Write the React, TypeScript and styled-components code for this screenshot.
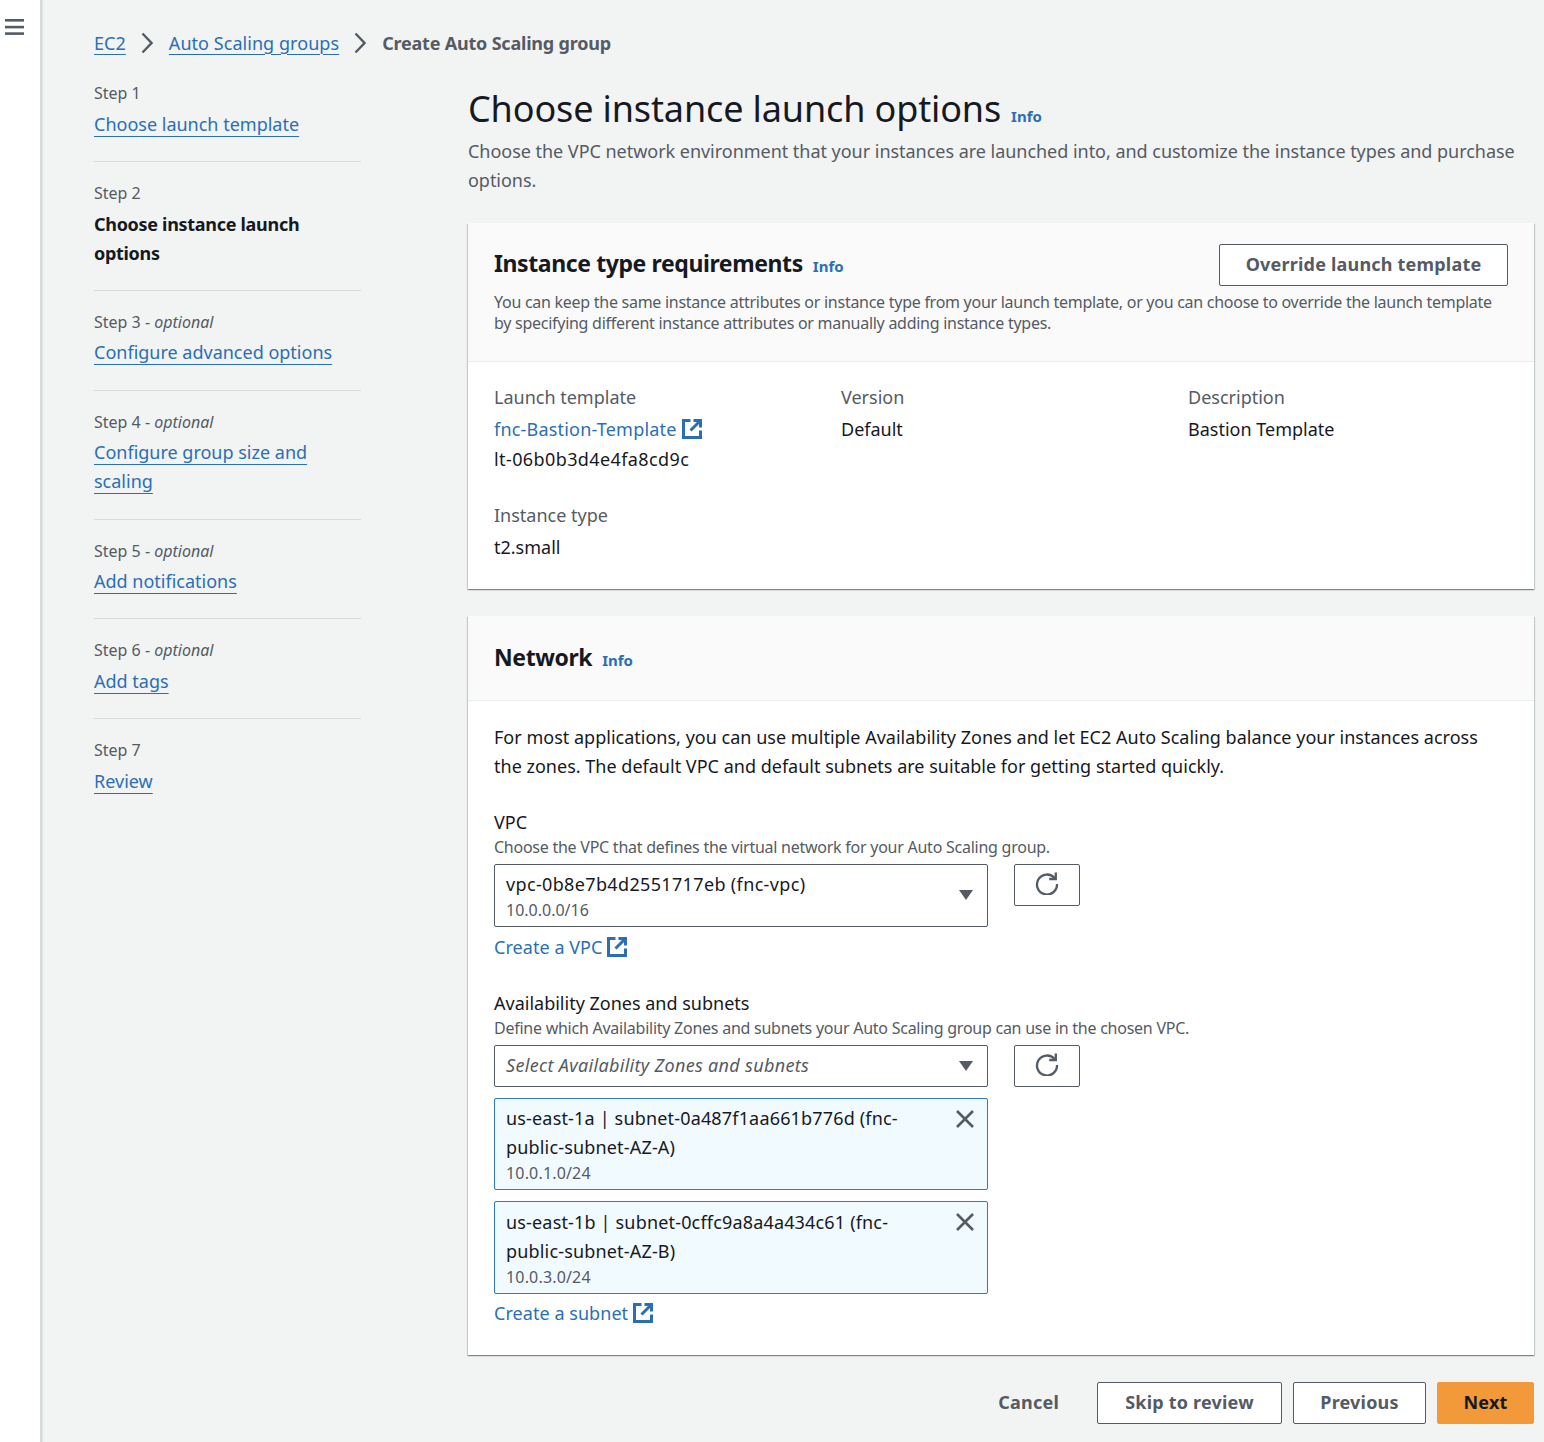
import React from "react";
import styled, { createGlobalStyle } from "styled-components";

const ink = "#16191f";
const grey = "#545b64";
const blue = "#2a6fb5";

const Global = createGlobalStyle`
  html, body { margin: 0; padding: 0; background: #f2f3f3; }
  body { font-family: "Noto Sans", "Open Sans", Arial, sans-serif; color: ${ink}; font-size: 18px; line-height: 29px; }
  * { box-sizing: border-box; }
`;

const Page = styled.div`
  display: flex;
  width: 1544px;
  height: 1442px;
  overflow: hidden;
  background: #f2f3f3;
`;
const Rail = styled.aside`
  flex: 0 0 42px;
  background: #fff;
  border-right: 2px solid #d5dbdb;
  box-shadow: 1px 0 1px rgba(0, 0, 0, 0.06);
  padding: 19px 0 0 5px;
  line-height: 0;
`;
const Main = styled.main`
  flex: 1;
  min-width: 0;
  padding: 28px 10px 0 52px;
`;
const Crumbs = styled.nav`
  display: flex;
  align-items: center;
  height: 30px;
  font-size: 18px;
`;
const Crumb = styled.a`
  color: ${blue};
  letter-spacing: 0.05px;
  text-decoration: underline;
  text-underline-offset: 4px;
  text-decoration-thickness: 1px;
`;
const Current = styled.span`
  color: ${grey};
  font-weight: 700;
  letter-spacing: -0.2px;
`;
const Columns = styled.div`
  display: flex;
  margin-top: 4.4px;
`;
const Steps = styled.ol`
  flex: 0 0 267px;
  list-style: none;
  margin: 0 107px 0 0;
  padding: 0;
`;
const Step = styled.li`
  padding: 18px 0 22.3px;
  border-bottom: 1px solid #d5dbdb;
  &:last-child { border-bottom: 0; }
`;
const StepLabel = styled.div`
  font-size: 16px;
  line-height: 26px;
  color: ${grey};
  margin-bottom: 3.5px;
  em { font-style: italic; }
`;
const StepLink = styled.a`
  color: ${blue};
  text-decoration: underline;
  text-underline-offset: 5px;
  text-decoration-thickness: 1px;
`;
const StepNow = styled.strong`
  font-weight: 700;
  letter-spacing: -0.3px;
`;
const Content = styled.div`
  flex: 1;
  min-width: 0;
`;
const HeadRow = styled.div`
  display: flex;
  align-items: baseline;
  gap: 10px;
  margin-top: 22.6px;
`;
const H1 = styled.h1`
  margin: 0;
  font-size: 36px;
  line-height: 48px;
  font-weight: 400;
  letter-spacing: -0.13px;
`;
const Info = styled.a`
  color: ${blue};
  font-size: 15px;
  font-weight: 700;
`;
const Lead = styled.p`
  margin: 4px 0 28px;
  color: ${grey};
  letter-spacing: -0.03px;
`;
const Card = styled.section`
  background: #fff;
  margin-bottom: 27px;
  box-shadow: 0 1px 1px 0 rgba(0, 28, 36, 0.3), 1px 1px 1px 0 rgba(0, 28, 36, 0.15), -1px 1px 1px 0 rgba(0, 28, 36, 0.15);
`;
const CardHead = styled.header<{ $h: number; $pt: number }>`
  height: ${(p) => p.$h}px;
  padding: ${(p) => p.$pt}px 26px 0;
  background: #fafafa;
  border-bottom: 1px solid #eaeded;
`;
const HeadTop = styled.div`
  display: flex;
  justify-content: space-between;
  align-items: center;
  min-height: 42px;
`;
const TitleRow = styled.div`
  display: flex;
  align-items: baseline;
  gap: 10px;
  padding-bottom: 2px;
`;
const H2 = styled.h2`
  margin: 0;
  font-size: 23px;
  line-height: 32px;
  font-weight: 700;
  letter-spacing: -0.4px;
`;
const HeadDesc = styled.p`
  margin: 6px 0 0;
  font-size: 16px;
  line-height: 21px;
  color: ${grey};
  letter-spacing: -0.27px;
`;
const Button = styled.button<{ $primary?: boolean; $w?: number }>`
  height: 42px;
  width: ${(p) => (p.$w ? `${p.$w}px` : "auto")};
  border-radius: 2px;
  font: 700 18px "Noto Sans", sans-serif;
  letter-spacing: 0.2px;
  padding: 0 0 1px;
  color: ${(p) => (p.$primary ? ink : grey)};
  background: ${(p) => (p.$primary ? "#f2993a" : "#fff")};
  border: 1px solid ${(p) => (p.$primary ? "#f2993a" : grey)};
`;
const SummaryBody = styled.div`
  display: grid;
  grid-template-columns: 347px 347px 1fr;
  padding: 21px 26px 27px;
`;
const Field = styled.div`
  color: ${ink};
`;
const FieldLabel = styled.div`
  color: ${grey};
  margin-bottom: 3px;
`;
const Mono = styled.div`
  letter-spacing: 0.4px;
  margin-top: 1px;
`;
const FieldWide = styled(Field)`
  grid-column: 1 / -1;
  margin-top: 27px;
`;
const LinkRow = styled.a<{ $ls?: number }>`
  display: inline-flex;
  align-items: center;
  gap: 5px;
  color: ${blue};
  letter-spacing: ${(p) => p.$ls ?? 0.05}px;
`;
const NetBody = styled.div`
  padding: 22px 26px 27px;
`;
const Para = styled.p`
  margin: 0 0 28px;
  max-width: 1000px;
  letter-spacing: 0.01px;
`;
const FormLabel = styled.div`
  line-height: 27px;
`;
const FormHint = styled.div`
  font-size: 16px;
  line-height: 23px;
  color: ${grey};
  margin-bottom: 5px;
  letter-spacing: -0.25px;
`;
const SelectRow = styled.div`
  display: flex;
  align-items: flex-start;
  gap: 26px;
`;
const Select = styled.div<{ $tall?: boolean }>`
  flex: 0 0 494px;
  height: ${(p) => (p.$tall ? 63 : 42)}px;
  border: 1px solid ${grey};
  border-radius: 2px;
  background: #fff;
  padding: ${(p) => (p.$tall ? "2px" : "5px")} 14px 0 11px;
  display: flex;
  justify-content: space-between;
  align-items: ${(p) => (p.$tall ? "center" : "flex-start")};
`;
const VpcName = styled.span`
  letter-spacing: 0.35px;
`;
const Placeholder = styled.span`
  font-style: italic;
  color: ${grey};
  letter-spacing: 0.32px;
`;
const Sub = styled.div`
  font-size: 16px;
  line-height: 23px;
  color: ${grey};
`;
const Caret = styled.span<{ $mt: number }>`
  flex: none;
  width: 0;
  height: 0;
  margin-top: ${(p) => p.$mt}px;
  border-left: 7.5px solid transparent;
  border-right: 7.5px solid transparent;
  border-top: 10px solid ${grey};
`;
const Refresh = styled.div`
  flex: 0 0 66px;
  height: 42px;
  padding-bottom: 4px;
  border: 1px solid ${grey};
  border-radius: 2px;
  background: #fff;
  display: flex;
  align-items: center;
  justify-content: center;
`;
const CreateLine = styled.div<{ $mt: number }>`
  margin-top: ${(p) => p.$mt}px;
`;
const Group = styled.div`
  margin-top: 28px;
`;
const Token = styled.div`
  width: 494px;
  height: 92.5px;
  margin-top: 11px;
  padding: 5.5px 12px 0 11px;
  background: #f1faff;
  border: 1px solid #2e7bbd;
  border-radius: 2px;
  display: flex;
  justify-content: space-between;
  align-items: flex-start;
`;
const TokenText = styled.div`
  width: 410px;
  letter-spacing: 0.17px;
`;
const Close = styled.span`
  flex: none;
  margin-top: 4.5px;
  display: flex;
`;
const Footer = styled.footer`
  display: flex;
  align-items: center;
  justify-content: flex-end;
  gap: 11px;
`;
const Cancel = styled.span`
  color: ${grey};
  font-weight: 700;
  margin-right: 27px;
  letter-spacing: 0.2px;
`;

const External = () => (
  <svg width="20" height="20" viewBox="0 0 20 20" fill="none" stroke={blue} strokeWidth="3">
    <path d="M8.5 1.5h-7v17h17v-7" />
    <path d="M11.5 1.5h7v7M18 2 8.5 11.5" />
  </svg>
);
const RefreshIcon = () => (
  <svg width="24" height="24" viewBox="0 0 24 24" fill="none" stroke={grey} strokeWidth="2.3">
    <path d="M19.6 7A10 10 0 1 0 22 13" />
    <path d="M20.8 1.5V8h-6.6" />
  </svg>
);
const X = () => (
  <svg width="20" height="20" viewBox="0 0 20 20" stroke={grey} strokeWidth="2.6" fill="none">
    <path d="m2 2 16 16M18 2 2 18" />
  </svg>
);
const Chevron = () => (
  <svg width="12" height="22" viewBox="0 0 12 22" fill="none" stroke={grey} strokeWidth="2.4" style={{ margin: "0 16px 0 15px" }}>
    <path d="m1.5 1.5 9 9.5-9 9.5" />
  </svg>
);

const steps: { n: number; opt?: boolean; text: string; now?: boolean }[] = [
  { n: 1, text: "Choose launch template" },
  { n: 2, text: "Choose instance launch options", now: true },
  { n: 3, opt: true, text: "Configure advanced options" },
  { n: 4, opt: true, text: "Configure group size and scaling" },
  { n: 5, opt: true, text: "Add notifications" },
  { n: 6, opt: true, text: "Add tags" },
  { n: 7, text: "Review" },
];

export default function App() {
  return (
    <>
      <Global />
      <Page>
        <Rail>
          <svg width="19" height="16" viewBox="0 0 19 16" fill={grey}>
            <rect y="0" width="19" height="2.6" />
            <rect y="6.8" width="19" height="2.6" />
            <rect y="13.3" width="19" height="2.6" />
          </svg>
        </Rail>
        <Main>
          <Crumbs>
            <Crumb>EC2</Crumb>
            <Chevron />
            <Crumb>Auto Scaling groups</Crumb>
            <Chevron />
            <Current>Create Auto Scaling group</Current>
          </Crumbs>
          <Columns>
            <Steps>
              {steps.map((s) => (
                <Step key={s.n}>
                  <StepLabel>
                    Step {s.n}
                    {s.opt && (
                      <>
                        {" - "}
                        <em>optional</em>
                      </>
                    )}
                  </StepLabel>
                  {s.now ? <StepNow>{s.text}</StepNow> : <StepLink>{s.text}</StepLink>}
                </Step>
              ))}
            </Steps>
            <Content>
              <HeadRow>
                <H1>Choose instance launch options</H1>
                <Info>Info</Info>
              </HeadRow>
              <Lead>
                Choose the VPC network environment that your instances are launched into, and customize the instance types and purchase options.
              </Lead>
              <Card>
                <CardHead $h={139} $pt={21}>
                  <HeadTop>
                    <TitleRow>
                      <H2>Instance type requirements</H2>
                      <Info>Info</Info>
                    </TitleRow>
                    <Button $w={289}>Override launch template</Button>
                  </HeadTop>
                  <HeadDesc>
                    You can keep the same instance attributes or instance type from your launch template, or you can choose to override the launch template by specifying different instance attributes or manually adding instance types.
                  </HeadDesc>
                </CardHead>
                <SummaryBody>
                  <Field>
                    <FieldLabel>Launch template</FieldLabel>
                    <LinkRow $ls={0.2}>
                      fnc-Bastion-Template <External />
                    </LinkRow>
                    <Mono>lt-06b0b3d4e4fa8cd9c</Mono>
                  </Field>
                  <Field>
                    <FieldLabel>Version</FieldLabel>
                    Default
                  </Field>
                  <Field>
                    <FieldLabel>Description</FieldLabel>
                    Bastion Template
                  </Field>
                  <FieldWide>
                    <FieldLabel>Instance type</FieldLabel>
                    t2.small
                  </FieldWide>
                </SummaryBody>
              </Card>
              <Card>
                <CardHead $h={85} $pt={25}>
                  <TitleRow>
                    <H2>Network</H2>
                    <Info>Info</Info>
                  </TitleRow>
                </CardHead>
                <NetBody>
                  <Para>
                    For most applications, you can use multiple Availability Zones and let EC2 Auto Scaling balance your instances across the zones. The default VPC and default subnets are suitable for getting started quickly.
                  </Para>
                  <FormLabel>VPC</FormLabel>
                  <FormHint>Choose the VPC that defines the virtual network for your Auto Scaling group.</FormHint>
                  <SelectRow>
                    <Select $tall>
                      <div>
                        <VpcName>vpc-0b8e7b4d2551717eb (fnc-vpc)</VpcName>
                        <Sub>10.0.0.0/16</Sub>
                      </div>
                      <Caret $mt={-2} />
                    </Select>
                    <Refresh>
                      <RefreshIcon />
                    </Refresh>
                  </SelectRow>
                  <CreateLine $mt={6}>
                    <LinkRow>
                      Create a VPC <External />
                    </LinkRow>
                  </CreateLine>
                  <Group>
                    <FormLabel>Availability Zones and subnets</FormLabel>
                    <FormHint>Define which Availability Zones and subnets your Auto Scaling group can use in the chosen VPC.</FormHint>
                    <SelectRow>
                      <Select>
                        <Placeholder>Select Availability Zones and subnets</Placeholder>
                        <Caret $mt={10} />
                      </Select>
                      <Refresh>
                        <RefreshIcon />
                      </Refresh>
                    </SelectRow>
                    <Token>
                      <TokenText>
                        us-east-1a | subnet-0a487f1aa661b776d (fnc-public-subnet-AZ-A)
                        <Sub>10.0.1.0/24</Sub>
                      </TokenText>
                      <Close>
                        <X />
                      </Close>
                    </Token>
                    <Token>
                      <TokenText>
                        us-east-1b | subnet-0cffc9a8a4a434c61 (fnc-public-subnet-AZ-B)
                        <Sub>10.0.3.0/24</Sub>
                      </TokenText>
                      <Close>
                        <X />
                      </Close>
                    </Token>
                    <CreateLine $mt={5}>
                      <LinkRow>
                        Create a subnet <External />
                      </LinkRow>
                    </CreateLine>
                  </Group>
                </NetBody>
              </Card>
              <Footer>
                <Cancel>Cancel</Cancel>
                <Button $w={185}>Skip to review</Button>
                <Button $w={133}>Previous</Button>
                <Button $primary $w={97}>Next</Button>
              </Footer>
            </Content>
          </Columns>
        </Main>
      </Page>
    </>
  );
}
